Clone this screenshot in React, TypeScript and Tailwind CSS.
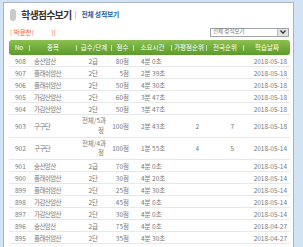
import React from "react";

const cols = "grid grid-cols-[20px_47px_35px_22px_38px_35px_37px_47px]";

type Row = {
  no: string;
  name: string;
  level: string[];
  score: string;
  time: string;
  r1: string;
  r2: string;
  date: string;
};

const rows: Row[] = [
  { no: "908", name: "송산암산", level: ["2급"], score: "80점", time: "4분 0초", r1: "", r2: "", date: "2018-05-18" },
  { no: "907", name: "플래쉬암산", level: ["2단"], score: "5점", time: "2분 39초", r1: "", r2: "", date: "2018-05-18" },
  { no: "906", name: "플래쉬암산", level: ["2단"], score: "50점", time: "4분 30초", r1: "", r2: "", date: "2018-05-18" },
  { no: "905", name: "가감산암산", level: ["2단"], score: "60점", time: "3분 47초", r1: "", r2: "", date: "2018-05-18" },
  { no: "904", name: "가감산암산", level: ["2단"], score: "50점", time: "3분 47초", r1: "", r2: "", date: "2018-05-18" },
  { no: "903", name: "구구단", level: ["전체/5과", "정"], score: "100점", time: "2분 43초", r1: "2", r2: "7", date: "2018-05-18" },
  { no: "902", name: "구구단", level: ["전체/4과", "정"], score: "100점", time: "1분 55초", r1: "4", r2: "5", date: "2018-05-14" },
  { no: "901", name: "송산암산", level: ["2급"], score: "70점", time: "4분 0초", r1: "", r2: "", date: "2018-05-14" },
  { no: "900", name: "플래쉬암산", level: ["2단"], score: "30점", time: "4분 20초", r1: "", r2: "", date: "2018-05-14" },
  { no: "899", name: "플래쉬암산", level: ["2단"], score: "25점", time: "4분 30초", r1: "", r2: "", date: "2018-05-14" },
  { no: "898", name: "가감산암산", level: ["2단"], score: "45점", time: "4분 0초", r1: "", r2: "", date: "2018-05-14" },
  { no: "897", name: "가감산암산", level: ["2단"], score: "30점", time: "4분 0초", r1: "", r2: "", date: "2018-05-14" },
  { no: "896", name: "송산암산", level: ["2급"], score: "75점", time: "4분 0초", r1: "", r2: "", date: "2018-04-27" },
  { no: "895", name: "플래쉬암산", level: ["2단"], score: "35점", time: "4분 30초", r1: "", r2: "", date: "2018-04-27" },
];

const headers = ["No", "종목", "급수/단계", "점수", "소요시간", "가평점순위", "전국순위", "학습날짜"];

export default function App() {
  return (
    <div
      className="w-[303px] h-[247px] overflow-hidden bg-[#d3e3f6] pl-[3px] pt-[2px]"
      style={{ fontFamily: '"Noto Sans CJK KR", "Noto Sans", sans-serif' }}
    >
      <div className="w-[291px] h-[250px] bg-white border border-[#a9b5c4] flex flex-col">
        {/* title */}
        <div className="mt-[5px] h-[13px] flex items-center">
          <div className="ml-[6px] w-[6px] h-[12px] rounded-full bg-[#c9c9c9]" />
          <div className="ml-[5px] text-[10px] font-bold tracking-[-0.8px] text-[#333] leading-none">
            학생점수보기
          </div>
          <div className="ml-[4px] w-px h-[8px] bg-[#cfcfcf]" />
          <div className="ml-[5px] text-[6.8px] font-bold text-[#2b5c9b] leading-none tracking-[-0.2px]">
            전체 성적보기
          </div>
        </div>
        {/* name + select */}
        <div className="mt-[5px] h-[12px] flex items-center justify-between">
          <div className="ml-[6px] text-[6.5px] leading-none text-[#f0662c] whitespace-pre">
            <span className="text-[#e88a5e]">[ </span>박윤찬(            )]
          </div>
          <div className="mr-[4px] w-[79px] h-[9px] border border-[#9ea4aa] bg-white flex items-center">
            <div className="flex-1 pl-[2px] text-[5.5px] leading-none text-[#777]">전체 성적보기</div>
            <div className="w-[11px] h-full bg-[#e3e3e3] border-l border-[#c0c0c0] flex items-center justify-center">
              <svg width="6" height="4" viewBox="0 0 6 4">
                <path d="M0.5 0.5 L3 3.2 L5.5 0.5" fill="none" stroke="#333" strokeWidth="1.3" />
              </svg>
            </div>
          </div>
        </div>
        {/* header bar */}
        <div
          className={`${cols} mt-[2px] ml-[5px] w-[281px] h-[15px] rounded-[3px] bg-linear-to-b from-[#8cc150] to-[#5b9a2b] text-white text-[6.5px] leading-none`}
        >
          {headers.map((h, i) => (
            <div key={h} className="flex items-center h-full">
              {i > 0 ? <div className="w-px h-[6px] bg-[#c6e2a6]" /> : null}
              <div className="flex-1 text-center whitespace-nowrap">{h}</div>
            </div>
          ))}
        </div>
        {/* rows */}
        <div className="ml-[5px] w-[281px] text-[6.5px] leading-[8px] text-[#777]">
          {rows.map((r) => {
            const dbl = r.level.length > 1;
            return (
              <div
                key={r.no}
                className={`${cols} ${dbl ? "h-[22.5px]" : "h-[12px]"} border-b border-[#e8e8e8] items-center whitespace-nowrap`}
              >
                <div className="pl-[6px]">{r.no}</div>
                <div className="pl-[5px] tracking-[-0.6px]">{r.name}</div>
                <div className={`text-right ${dbl ? "pr-[5px] leading-[9.5px]" : "pr-[13px]"}`}>
                  {r.level.map((l, i) => (
                    <div key={i} className={i === 1 ? "pr-[2px]" : ""}>{l}</div>
                  ))}
                </div>
                <div className="text-right pr-[4px]">{r.score}</div>
                <div className="pl-[8px]">{r.time}</div>
                <div className="text-right pr-[7px]">{r.r1}</div>
                <div className="text-right pr-[9px]">{r.r2}</div>
                <div className="text-right pr-[3px]">{r.date}</div>
              </div>
            );
          })}
        </div>
      </div>
    </div>
  );
}
